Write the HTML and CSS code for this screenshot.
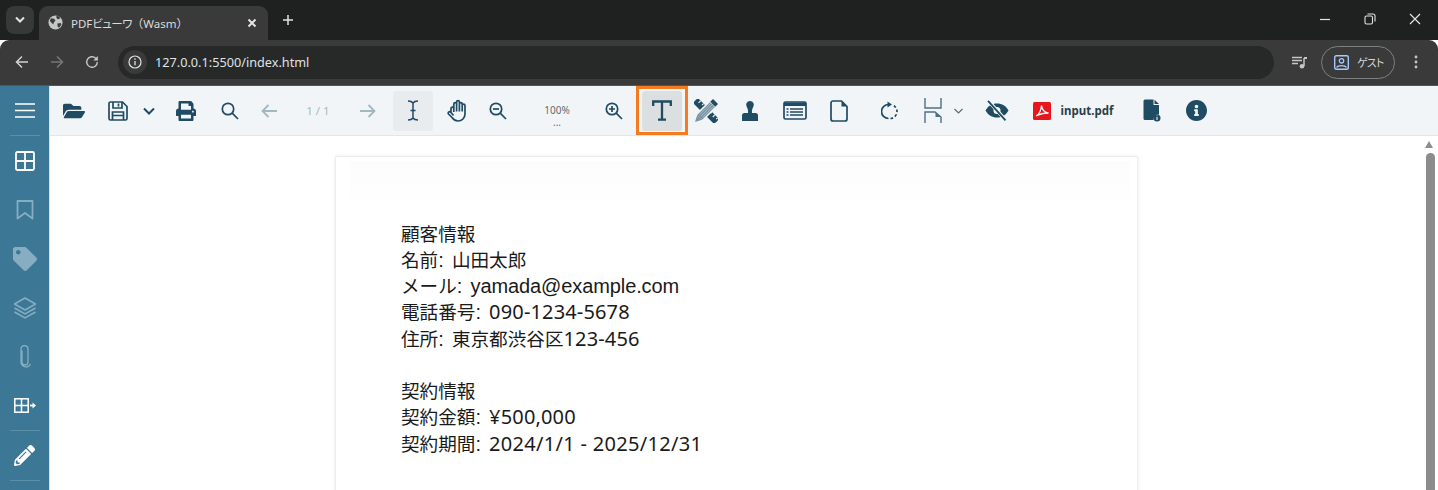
FILE: index.html
```html
<!DOCTYPE html>
<html lang="ja">
<head>
<meta charset="utf-8">
<title>PDFビューワ（Wasm）</title>
<link rel="stylesheet" href="styles.css">
</head>
<body>
<div class="window">
  <div class="tabstrip">
    <button class="tab-search"><svg width="12" height="8" viewBox="0 0 12 8"><path d="M2 1.500l4 4 4-4" class="st-w2"/></svg></button>
    <div class="tab">
      <svg class="globe" width="15" height="15" viewBox="0 0 16 16"><circle cx="8" cy="8" r="7.500" fill="#c4c7c5"/><path d="M3 3.500l3.500.5 1.500 2-1.500 1.500-1 2.500-1.500-1.500-2-2zM9 .8l3 .8 1 2-2.500 1-1.500-1.500zM10 9l3.500-.5.8 1.500-2.500 3.500-1.500-1z" fill="#3c3c3c"/></svg>
      <span class="tab-title">PDF<span class="kana">ビューワ</span>（Wasm）</span>
      <svg class="tab-x" width="10" height="10" viewBox="0 0 10 10"><path d="M1.500 1.500l7 7M8.500 1.500l-7 7" class="st-w2"/></svg>
    </div>
    <svg class="newtab" width="12" height="12" viewBox="0 0 12 12"><path d="M6 1v10M1 6h10" stroke="#e3e3e3" stroke-width="1.500" fill="none"/></svg>
    <div class="winctl">
      <svg width="12" height="12" viewBox="0 0 12 12"><path d="M1 6.500h10" stroke="#e3e3e3" stroke-width="1.200"/></svg>
      <svg width="12" height="12" viewBox="0 0 12 12"><rect x="1" y="3" width="7.500" height="8" rx="1.500" fill="none" stroke="#e3e3e3" stroke-width="1.100"/><path d="M3.500 1h5.500a2 2 0 0 1 2 2v5.500" fill="none" stroke="#e3e3e3" stroke-width="1.100"/></svg>
      <svg width="12" height="12" viewBox="0 0 12 12"><path d="M1 1l10 10M11 1L1 11" stroke="#e3e3e3" stroke-width="1.200"/></svg>
    </div>
  </div>

  <div class="navbar">
    <svg class="nav-ic" width="14" height="14" viewBox="0 0 14 14"><path d="M13 7H2M7 1.500L1.500 7 7 12.500" fill="none" stroke="#d0d3d3" stroke-width="1.500"/></svg>
    <svg class="nav-ic" width="14" height="14" viewBox="0 0 14 14"><path d="M1 7h11M7 1.500L12.500 7 7 12.500" fill="none" stroke="#777" stroke-width="1.500"/></svg>
    <svg class="nav-ic" width="14" height="14" viewBox="0 0 14 14"><path d="M12.300 7a5.300 5.300 0 1 1-1.600-3.800L12.500 5" fill="none" stroke="#c4c7c5" stroke-width="1.400"/><path d="M12.800 1v4.500H8.300z" fill="#c4c7c5"/></svg>
    <div class="omnibox">
      <span class="site-info"><svg width="14" height="14" viewBox="0 0 14 14"><circle cx="7" cy="7" r="6" fill="none" stroke="#e3e3e3" stroke-width="1.200"/><path d="M7 6v4.200" stroke="#e3e3e3" stroke-width="1.300"/><circle cx="7" cy="4.100" r=".8" fill="#e3e3e3"/></svg></span>
      <span class="url">127.0.0.1:5500/index.html</span>
    </div>
    <svg class="media" width="16" height="13" viewBox="0 0 16 13"><path d="M0 1.500h10M0 4.500h10M0 7.500h6" stroke="#c4c7c5" stroke-width="1.300"/><path d="M12 2v8" stroke="#c4c7c5" stroke-width="1.500"/><path d="M12 1h3v2h-3z" fill="#c4c7c5"/><circle cx="10" cy="10.300" r="2.300" fill="#c4c7c5"/></svg>
    <div class="guest">
      <svg width="15" height="15" viewBox="0 0 15 15"><rect x=".7" y=".7" width="13.600" height="13.600" rx="1.500" fill="none" stroke="#a8c7fa" stroke-width="1.400"/><circle cx="7.500" cy="5.800" r="2.200" fill="none" stroke="#a8c7fa" stroke-width="1.300"/><path d="M2.500 12.500c1.500-2.500 8.500-2.500 10 0" fill="none" stroke="#a8c7fa" stroke-width="1.300"/></svg>
      <span class="guest-label">ゲスト</span>
    </div>
    <svg class="kebab" width="4" height="14" viewBox="0 0 4 14"><circle cx="2" cy="2" r="1.400" fill="#c7c7c7"/><circle cx="2" cy="7" r="1.400" fill="#c7c7c7"/><circle cx="2" cy="12" r="1.400" fill="#c7c7c7"/></svg>
  </div>

  <div class="viewer">
    <aside class="sidebar">
      <div class="side-item"><svg width="20" height="15" viewBox="0 0 20 15"><path d="M0 1h20M0 7.500h20M0 14h20" stroke="#fff" stroke-width="1.600"/></svg></div>
      <div class="side-sep"></div>
      <div class="side-item"><svg width="20" height="20" viewBox="0 0 20 20"><rect x="1" y="1" width="18" height="18" rx="1.500" fill="none" stroke="#fff" stroke-width="1.800"/><path d="M10 1v18M1 10h18" stroke="#fff" stroke-width="1.800"/></svg></div>
      <div class="side-item"><svg width="18" height="20" viewBox="0 0 18 20"><path d="M1.500 1h15v17.500L9 13l-7.500 5.500z" fill="none" stroke="#86adc1" stroke-width="1.800" stroke-linejoin="round"/></svg></div>
      <div class="side-item"><svg width="24" height="24" viewBox="0 0 512 512"><path fill="#86adc1" d="M0 252.118V48C0 21.490 21.490 0 48 0h204.118a48 48 0 0 1 33.941 14.059l211.882 211.882c18.745 18.745 18.745 49.137 0 67.882L293.823 497.941c-18.745 18.745-49.137 18.745-67.882 0L14.059 286.059A48 48 0 0 1 0 252.118zM112 64c-26.510 0-48 21.490-48 48s21.490 48 48 48 48-21.490 48-48-21.490-48-48-48z"/></svg></div>
      <div class="side-item"><svg width="24" height="22" viewBox="0 0 24 22"><path d="M12 1L1.500 7 12 13 22.500 7z" fill="none" stroke="#86adc1" stroke-width="1.500" stroke-linejoin="round"/><path d="M1.500 11L12 17l10.500-6M1.500 15L12 21l10.500-6" fill="none" stroke="#86adc1" stroke-width="1.500"/></svg></div>
      <div class="side-item"><svg width="12" height="23" viewBox="0 0 12 23"><path d="M3 6v11.500a3 3 0 0 0 6 0V4.500a3.500 3.500 0 0 0-7 0V18a5 5 0 0 0 9.500 1.500" transform="translate(0 -.5)" fill="none" stroke="#86adc1" stroke-width="1.300"/></svg></div>
      <div class="side-item"><svg width="22" height="15" viewBox="0 0 22 15"><rect x=".8" y=".8" width="13.400" height="13.400" fill="none" stroke="#fff" stroke-width="1.500"/><path d="M7.500 1v13M1 7.500h13" stroke="#fff" stroke-width="1.500"/><path d="M16 7.500h3" stroke="#fff" stroke-width="1.800"/><path d="M18.500 4.500l3.500 3-3.500 3z" fill="#fff"/></svg></div>
      <div class="side-sep"></div>
      <div class="side-item"><svg width="21" height="21" viewBox="0 0 512 512"><path fill="#fff" d="M497.900 142.100l-46.100 46.100c-4.700 4.700-12.300 4.700-17 0l-111-111c-4.700-4.700-4.700-12.300 0-17l46.100-46.100c18.700-18.700 49.100-18.700 67.900 0l60.100 60.100c18.800 18.700 18.800 49.100 0 67.900zM284.200 99.800L21.600 362.400.4 483.900c-2.900 16.400 11.400 30.600 27.800 27.800l121.500-21.300 262.600-262.600c4.700-4.700 4.700-12.300 0-17l-111-111c-4.800-4.700-12.400-4.700-17.100 0zM124.100 339.900c-5.500-5.500-5.500-14.300 0-19.800l154-154c5.500-5.500 14.300-5.500 19.800 0s5.500 14.300 0 19.800l-154 154c-5.500 5.500-14.300 5.500-19.800 0zM88 424h48v36.300l-64.500 11.300-31.100-31.100L51.700 376H88v48z"/></svg></div>
      <div class="side-sep"></div>
    </aside>

    <div class="main">
      <div class="toolbar">
        <div class="tool"><svg width="22" height="20" viewBox="0 0 576 512"><path class="ink" d="M572.694 292.093L500.270 416.248A63.997 63.997 0 0 1 444.989 448H45.025c-18.523 0-30.064-20.093-20.731-36.093l72.424-124.155A64 64 0 0 1 152 256h399.964c18.523 0 30.064 20.093 20.730 36.093zM152 224h328v-48c0-26.510-21.490-48-48-48H272l-64-64H48C21.490 64 0 85.490 0 112v278.046l69.077-118.418C86.214 242.250 117.989 224 152 224z"/></svg></div>
        <div class="tool"><svg width="20" height="20" viewBox="0 0 20 20"><path d="M1 2.500A1.500 1.500 0 0 1 2.500 1h12L19 5.500v12a1.500 1.500 0 0 1-1.500 1.500h-15A1.500 1.500 0 0 1 1 17.500z" class="st-ink"/><path d="M5 1v6h9V1" class="st-ink"/><path d="M10.500 2.500v3" class="st-ink"/><path d="M4.500 19v-8h11v8M4.500 14.500h11" class="st-ink"/></svg></div>
        <div class="tool"><svg width="12" height="8" viewBox="0 0 12 8"><path d="M1 1.500l5 5 5-5" fill="none" stroke="#1f4b63" stroke-width="2"/></svg></div>
        <div class="tool"><svg width="20" height="20" viewBox="0 0 512 512"><path class="ink" d="M448 192V77.250c0-8.490-3.370-16.620-9.370-22.630L393.370 9.370c-6-6-14.140-9.370-22.630-9.370H96C78.330 0 64 14.330 64 32v160c-35.350 0-64 28.650-64 64v112c0 8.840 7.160 16 16 16h48v96c0 17.670 14.330 32 32 32h320c17.670 0 32-14.330 32-32v-96h48c8.840 0 16-7.160 16-16V256c0-35.350-28.650-64-64-64zm-64 256H128v-96h256v96zm0-224H128V64h192v48c0 8.840 7.160 16 16 16h48v96zm48 72c-13.250 0-24-10.750-24-24 0-13.260 10.750-24 24-24s24 10.740 24 24c0 13.250-10.750 24-24 24z"/></svg></div>
        <div class="tool"><svg width="18" height="18" viewBox="0 0 18 18"><circle cx="7" cy="7" r="5.700" class="st-ink" stroke-width="2"/><path d="M11.200 11.200l5.800 5.800" class="st-ink" stroke-width="2.400"/></svg></div>
        <div class="tool"><svg width="16" height="14" viewBox="0 0 16 14"><path d="M16 7H2M7.500 1L1.500 7l6 6" fill="none" stroke="#a3b7c1" stroke-width="1.800"/></svg></div>
        <div class="tool page-num">1 / 1</div>
        <div class="tool"><svg width="16" height="14" viewBox="0 0 16 14"><path d="M0 7h14M8.500 1l6 6-6 6" fill="none" stroke="#a3b7c1" stroke-width="1.800"/></svg></div>
        <div class="tool"><span class="tool-box"><svg width="14" height="21" viewBox="0 0 14 21"><path d="M2 1c2.500 0 4 .5 5 2 1-1.500 2.500-2 5-2M2 20c2.500 0 4-.5 5-2 1 1.500 2.500 2 5 2M7 3v15M4.500 10.500h5" fill="none" stroke="#1f4b63" stroke-width="1.500"/></svg></span></div>
        <div class="tool"><svg width="22" height="23" viewBox="0 0 22 23"><path d="M4 13V9.500a1.400 1.400 0 0 1 2.800 0V5a1.400 1.400 0 0 1 2.800 0V3a1.400 1.400 0 0 1 2.800 0v2a1.400 1.400 0 0 1 2.800 0v1.500a1.400 1.400 0 0 1 2.800 0V15c0 4-3 7-7 7-3 0-4.500-1.500-6-3.500L1.500 15c-1.200-1.700 1.200-3.200 2.500-1.500l2.500 3M6.800 9.500V13M9.600 5v7.500M12.400 4v8.500M15.200 6v6.500" class="st-ink" stroke-width="2" stroke-linejoin="round"/></svg></div>
        <div class="tool"><svg width="18" height="18" viewBox="0 0 18 18"><circle cx="7" cy="7" r="5.700" class="st-ink" stroke-width="2"/><path d="M11.200 11.200l5.800 5.800" class="st-ink" stroke-width="2.400"/><path d="M4 7h6" class="st-ink" stroke-width="1.800"/></svg></div>
        <div class="tool zoom-val"><span>100%</span><span class="zoom-dots">...</span></div>
        <div class="tool"><svg width="18" height="18" viewBox="0 0 18 18"><circle cx="7" cy="7" r="5.700" class="st-ink" stroke-width="2"/><path d="M11.200 11.200l5.800 5.800" class="st-ink" stroke-width="2.400"/><path d="M4 7h6M7 4v6" class="st-ink" stroke-width="1.800"/></svg></div>
        <div class="tool-gap"></div>
        <div class="tool tool-text"><span class="tool-box active"><svg width="20" height="21" viewBox="0 0 20 21"><path d="M1.200 6V1.500h17.600V6M10 1.500v18M6 19.700h8" fill="none" stroke="#1f4b63" stroke-width="2.300"/></svg></span></div>
        <div class="tool"><svg width="24" height="24" viewBox="0 0 24 24">
          <g transform="rotate(45 12 12)"><rect x="-3" y="8.500" width="30" height="7" class="ink"/><path d="M1 8.500v3M5 8.500v2M17 8.500v2M21 8.500v3M25 8.500v2" stroke="#f2f5f7" stroke-width="1.100"/></g>
          <g transform="rotate(-45 12 12)"><rect x="2" y="7" width="24" height="10" fill="#f2f5f7"/><rect x="3" y="8.500" width="18" height="7" fill="#7b95a4"/><path d="M5 10h16M5 12h16M5 14h16" stroke="#c3d0d7" stroke-width=".6"/><rect x="21.500" y="8.500" width="4" height="7" class="ink"/><path d="M-3.500 12L3 8.500v7z" fill="#7b95a4"/></g>
        </svg></div>
        <div class="tool"><svg width="20" height="20" viewBox="0 0 20 20"><path class="ink" d="M10 0a4 4 0 0 0-3 6.500c.8 1.300 1.200 3 1 5.500H4.500A2.500 2.500 0 0 0 2 14.500V20h16v-5.500a2.500 2.500 0 0 0-2.500-2.500H12c-.2-2.500.2-4.200 1-5.500A4 4 0 0 0 10 0z"/></svg></div>
        <div class="tool"><svg width="24" height="19" viewBox="0 0 24 19"><rect x="1" y="1" width="22" height="17" rx="1.500" class="st-ink" stroke-width="1.800"/><path d="M1 1.500h22v3.500H1z" class="ink"/><path d="M7 8h13M7 11h13M7 14h13M3.500 8H5.500M3.500 11H5.500M3.500 14H5.500" stroke="#1f4b63" stroke-width="1.500"/></svg></div>
        <div class="tool"><svg width="18" height="22" viewBox="0 0 18 22"><path d="M3 1h8.500L17 6.500V19a2 2 0 0 1-2 2H3a2 2 0 0 1-2-2V3a2 2 0 0 1 2-2z" class="st-ink" stroke-width="1.800" stroke-linejoin="round"/><path d="M11.500 1v5.500H17z" class="ink"/></svg></div>
        <div class="tool"><svg width="17" height="19" viewBox="0 0 17 19"><path d="M7.500 3.500a7 7 0 0 0 0 14" class="st-ink" stroke-width="2.400"/><path d="M6.500.5l4.500 3-4.500 3z" class="ink"/><path d="M9.500 17.500a7 7 0 0 0 6.500-7 7 7 0 0 0-4-6.300" class="st-ink" stroke-width="2.400" stroke-dasharray="2.600 2.200"/></svg></div>
        <div class="tool"><svg width="18" height="25" viewBox="0 0 18 25"><path d="M1 0v10h16V0M1 25V14h10l6 5v6" fill="none" stroke="#4d7084" stroke-width="1.400"/><path d="M11.500 14.500v4.500H17z" fill="#4d7084"/></svg></div>
        <div class="tool"><svg width="9" height="6" viewBox="0 0 9 6"><path d="M.5 1l4 4 4-4" fill="none" stroke="#4d7084" stroke-width="1.200"/></svg></div>
        <div class="tool"><svg width="24" height="21" viewBox="0 0 24 21"><path d="M0.500 10.500C3 6 7 3.500 12 3.500s9 2.500 11.500 7c-2.500 4.500-6.500 7-11.500 7s-9-2.500-11.500-7z" class="ink"/><circle cx="12" cy="10.500" r="3.500" fill="#f2f5f7"/><path d="M3.500 1l17 19" stroke="#f2f5f7" stroke-width="3.500"/><path d="M3 .8l17.500 19.500" stroke="#1f4b63" stroke-width="1.800"/></svg></div>
        <div class="tool"><svg width="18" height="18" viewBox="0 0 18 18"><rect width="18" height="18" rx="1.500" fill="#e6161c"/><path d="M3 14c3-1.500 5-5 5.500-10.500 .5 4 3 7 7 7.500-4 0-9 1-12.500 3z" fill="none" stroke="#fff" stroke-width="1.300"/></svg></div>
        <div class="tool file-name">input.pdf</div>
        <div class="tool-gap"></div>
        <div class="tool"><svg width="18" height="23" viewBox="0 0 18 23"><path d="M2 .5h8.500V6H16v9.500a5 5 0 0 0-5.500 5.500H2A1.500 1.500 0 0 1 .5 19.500V2A1.500 1.500 0 0 1 2 .5z" class="ink"/><path d="M11.500.8L16 5h-4.500z" class="ink"/><circle cx="14" cy="19" r="3.500" class="ink"/><path d="M14 18v3M14 16.600v.6" stroke="#fff" stroke-width="1"/></svg></div>
        <div class="tool"><svg width="21" height="21" viewBox="8 8 496 496"><path class="ink" d="M256 8C119.043 8 8 119.083 8 256c0 136.997 111.043 248 248 248s248-111.003 248-248C504 119.083 392.957 8 256 8zm0 110c23.196 0 42 18.804 42 42s-18.804 42-42 42-42-18.804-42-42 18.804-42 42-42zm56 254c0 6.627-5.373 12-12 12h-88c-6.627 0-12-5.373-12-12v-24c0-6.627 5.373-12 12-12h12v-64h-12c-6.627 0-12-5.373-12-12v-24c0-6.627 5.373-12 12-12h64c6.627 0 12 5.373 12 12v100h12c6.627 0 12 5.373 12 12v24z"/></svg></div>
      </div>

      <div class="content">
        <div class="page">
          <div class="page-smudge"></div>
          <div class="page-text">
            <p><span class="cjk">顧客情報</span></p>
            <p><span class="cjk">名前</span><span class="sep">: </span><span class="cjk">山田太郎</span></p>
            <p><span class="cjk">メール</span><span class="sep">: </span><span class="latin">yamada@example.com</span></p>
            <p><span class="cjk">電話番号</span><span class="sep">: </span><span class="num">090-1234-5678</span></p>
            <p><span class="cjk">住所</span><span class="sep">: </span><span class="cjk">東京都渋谷区</span><span class="num">123-456</span></p>
            <p>&nbsp;</p>
            <p><span class="cjk">契約情報</span></p>
            <p><span class="cjk">契約金額</span><span class="sep">: </span><span class="num">¥500,000</span></p>
            <p><span class="cjk">契約期間</span><span class="sep">: </span><span class="num long">2024/1/1 - 2025/12/31</span></p>
          </div>
        </div>
        <div class="scrollbar">
          <span class="scroll-up"></span>
          <span class="scroll-thumb"></span>
        </div>
      </div>
    </div>
  </div>
</div>
</body>
</html>
```

FILE: styles.css
```css
* { box-sizing: border-box; }
html, body { margin: 0; padding: 0; height: 100%; overflow: hidden; background: #fff; }
body { font-family: "Noto Sans", "Noto Sans CJK JP", sans-serif; }
button { border: 0; padding: 0; }
svg { display: block; flex: none; }
p { margin: 0; }
.window { width: 1438px; height: 490px; display: flex; flex-direction: column; }

.st-w2 { fill: none; stroke: #e3e3e3; stroke-width: 2; }
.ink { fill: #1f4b63; }
.st-ink { fill: none; stroke: #1f4b63; stroke-width: 1.700; }

.tabstrip { height: 40px; background: #1f2020; display: flex; align-items: flex-start; padding: 6px 0 0 6px; flex: none; }
.tab-search { width: 28px; height: 28px; border-radius: 8px; background: #373838; display: flex; align-items: center; justify-content: center; margin-right: 5px; }
.tab { width: 229px; height: 34px; background: #3a3a3a; border-radius: 9px 9px 0 0; display: flex; align-items: center; padding: 0 11px 0 9px; color: #e3e3e3; }
.globe { margin-top: -1px; }
.tab-title { font: 11.500px "Noto Sans", "Noto Sans CJK JP", sans-serif; margin-left: 8px; flex: 1; color: #dcdcdc; }
.kana { font-feature-settings: "palt"; letter-spacing: -.6px; }
.newtab { margin: 8px 0 0 14px; }
.winctl { margin-left: auto; display: flex; gap: 33px; padding: 7px 17px 0 0; }

.navbar { height: 46px; background: #3a3a3a; display: flex; align-items: center; padding: 0 0 1px 15px; flex: none; border-bottom: 1px solid #555; border-radius: 9px 9px 0 0; }
.nav-ic { margin-right: 21px; }
.omnibox { width: 1156px; height: 33px; margin-left: -2px; background: #272828; border-radius: 17px; display: flex; align-items: center; padding-left: 5px; }
.site-info { width: 24px; height: 24px; border-radius: 50%; background: #3a3a3a; display: flex; align-items: center; justify-content: center; }
.url { font: 12.700px "Noto Sans", sans-serif; color: #dfe3e6; margin-left: 8px; }
.media { margin-left: 18px; }
.guest { width: 74px; height: 33px; margin-left: 13px; border: 1px solid #7d7f80; border-radius: 17px; display: flex; align-items: center; padding-left: 12px; }
.guest-label { font: 11px "Noto Sans CJK JP", sans-serif; font-feature-settings: "palt"; letter-spacing: -.8px; color: #d5d5d5; margin-left: 8px; }
.kebab { margin-left: 19px; }

.viewer { flex: 1; display: flex; min-height: 0; }
.sidebar { width: 50px; flex: none; background: #3c7896; display: flex; flex-direction: column; align-items: center; border-right: 1px solid #d8e4ea; }
.side-item { width: 100%; height: 49px; flex: none; display: flex; align-items: center; justify-content: center; }
.side-sep { width: 30px; height: 1px; background: #5b8ea7; flex: none; }

.main { flex: 1; display: flex; flex-direction: column; min-width: 0; }
.toolbar { height: 50px; background: #f2f5f7; border-bottom: 1px solid #e3e6e8; display: grid; grid-template-columns: 44px 44px 18px 56px 32px 46px 52px 48px 42px 48px 32px 86px 28px 12px 44px 44px 44px 46px 42px 58px 30px 20px 58px 32px 58px 14px 44px 44px; padding-left: 2px; align-items: center; flex: none; }
.tool { display: flex; align-items: center; justify-content: center; height: 49px; min-width: 0; }
.tool-box { width: 40px; height: 40px; flex: none; border-radius: 3px; background: #e9ecee; display: flex; align-items: center; justify-content: center; }
.tool-box.active { background: #dcdfe0; }
.tool-text { border: 3px solid #f47b20; width: 52px; justify-self: center; }
.page-num { font-size: 11.500px; color: #a9b7be; white-space: nowrap; }
.zoom-val { flex-direction: column; font-size: 10px; color: #5f6b72; line-height: 13px; padding-top: 10px; white-space: nowrap; }
.zoom-dots { font-size: 10px; line-height: 10px; }
.file-name { font-size: 11.500px; font-weight: 700; color: #2c3e4a; white-space: nowrap; }

.content { flex: 1; position: relative; display: flex; justify-content: center; padding: 20px 15px 0 0; min-height: 0; background: #fff; overflow: hidden; }
.page { width: 803px; height: 700px; flex: none; background: #fff; border: 1px solid #ececec; border-radius: 2px; box-shadow: 0 0 4px rgba(0,0,0,.08); padding: 63.500px 0 0 65px; position: relative; }
.page-smudge { position: absolute; left: 14px; right: 7px; top: 4px; height: 48px; background: linear-gradient(#fcfcfc, #fff); }
.page-text { position: relative; font: 20px/26.250px "Liberation Sans", "Noto Sans CJK JP", sans-serif; color: #1a1a1a; }
.cjk { font-family: "Noto Sans CJK JP", sans-serif; font-size: 18.600px; line-height: 1; }
.sep { letter-spacing: 1.300px; }
.latin { letter-spacing: -.1px; }
.num { font-family: "Noto Sans", sans-serif; letter-spacing: .15px; line-height: 1; }
.num.long { letter-spacing: .3px; }
.scrollbar { position: absolute; top: 0; right: 0; bottom: 0; width: 16px; }
.scroll-up { position: absolute; left: 3px; top: 5px; width: 0; height: 0; border: 4.500px solid transparent; border-top: 0; border-bottom: 7px solid #8c8c8c; }
.scroll-thumb { position: absolute; left: 4px; top: 17px; bottom: -10px; width: 9px; border-radius: 5px; background: #8c8c8c; }
```
